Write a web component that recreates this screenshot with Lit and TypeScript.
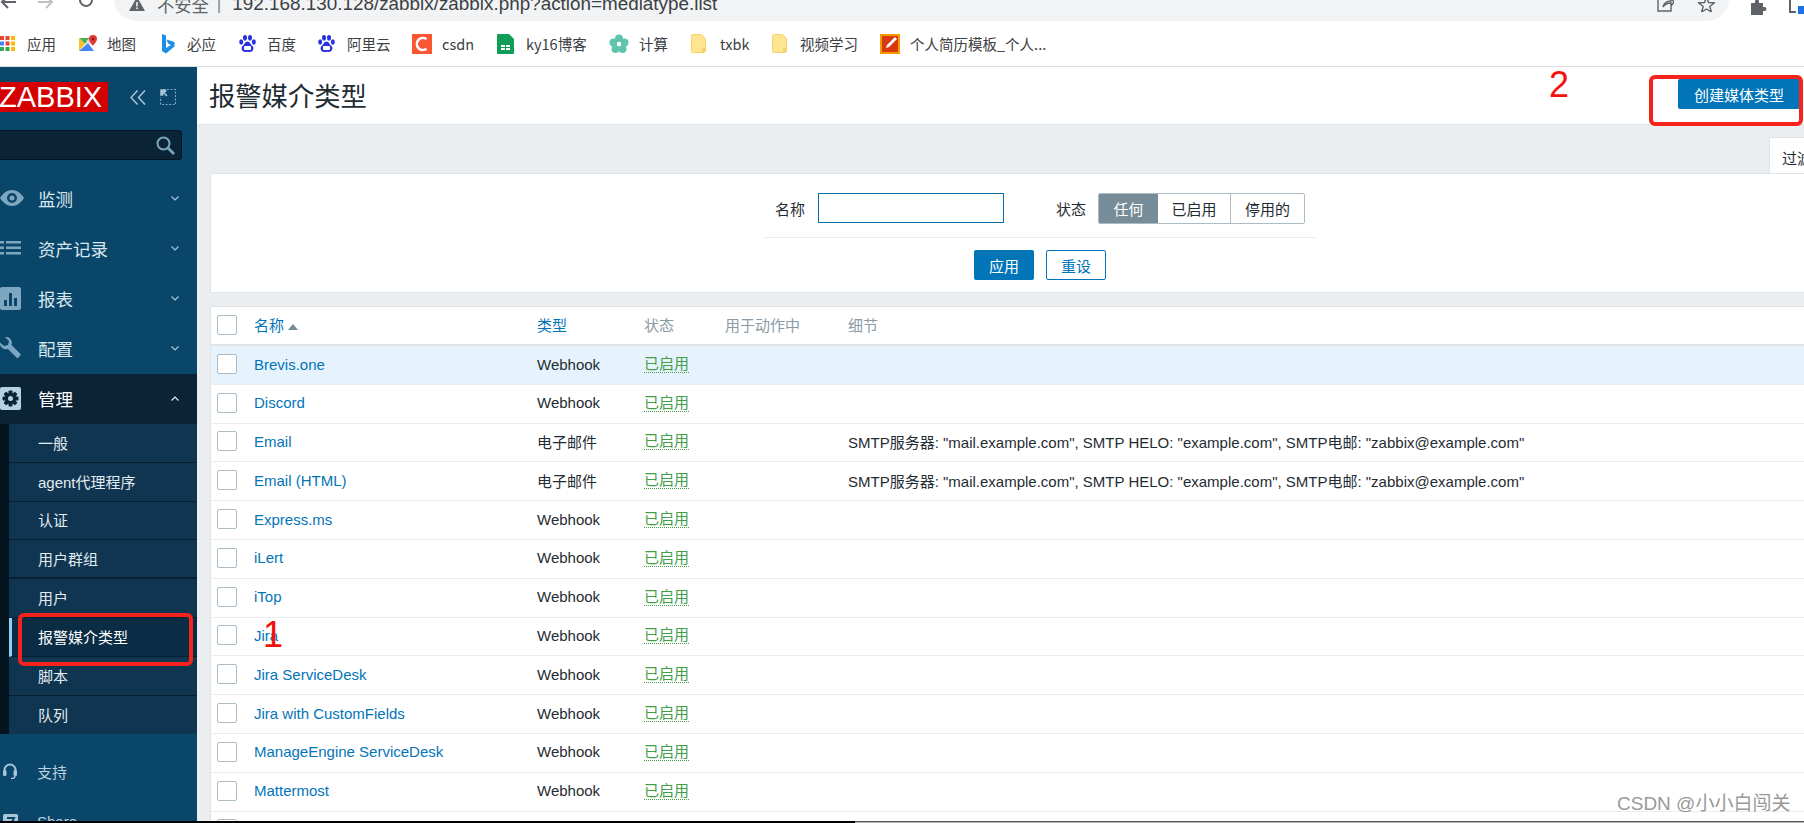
import { LitElement, html, svg, css } from "lit";
import { customElement } from "lit/decorators.js";

const icons: Record<string, unknown> = {
  apps: html`<svg width="15" height="15" viewBox="0 0 15 15">
    ${[["#ea4335","#ea4335","#fbbc05"],["#4285f4","#ea4335","#fbbc05"],["#34a853","#34a853","#fbbc05"]].map((r,y)=>r.map((c,x)=>svg`<rect x=${x*5.5} y=${y*5.5} width="4" height="4" fill=${c}/>`))}
  </svg>`,
  maps: html`<svg width="18" height="18" viewBox="0 0 18 18">
    <path d="M0 3h12L6 9 0 3z" fill="#4caf50"/><path d="M0 3l6 6-6 7V3z" fill="#fbc02d"/><path d="M0 16l9-8 6 8H0z" fill="#4285f4"/><path d="M7 6l4-3h3l-3 6-4-3z" fill="#d8d8d8"/><path d="M14 0a4 4 0 0 1 4 4c0 3-4 6-4 7-.4-1-4-4-4-7a4 4 0 0 1 4-4z" fill="#e53935"/><circle cx="14" cy="4" r="1.4" fill="#8f1d18"/>
  </svg>`,
  bing: html`<svg width="14" height="20" viewBox="0 0 14 20">
    <path d="M1 0l4 1.500v12.500l5-3-3-1.500-1.500-4L13.500 8v4.500L5 19.500 1 17z" fill="#1b8fe8"/>
  </svg>`,
  paw: html`<svg width="17" height="18" viewBox="0 0 17 18" fill="#2932e1">
    <ellipse cx="2.200" cy="7" rx="2" ry="2.700"/><ellipse cx="6" cy="2.800" rx="2" ry="2.800"/><ellipse cx="11" cy="2.800" rx="2" ry="2.800"/><ellipse cx="14.800" cy="7" rx="2" ry="2.700"/><path d="M8.500 6.500c2.500 0 3 3 5 4.500 2 2 .5 6-2.500 6-1 0-1.500-.3-2.500-.3S7 17 6 17c-3 0-4.500-4-2.500-6 2-1.500 2.500-4.500 5-4.500z"/><rect x="5" y="11" width="7" height="4" rx="1" fill="#fff"/>
  </svg>`,
  csdn: html`<svg width="20" height="20" viewBox="0 0 20 20"><rect width="20" height="20" fill="#fc5531"/><path d="M14.500 5.200A6 6 0 1 0 14.500 14.800" fill="none" stroke="#fff" stroke-width="2.600"/></svg>`,
  sheet: html`<svg width="17" height="20" viewBox="0 0 17 20"><path d="M1 0h11l5 5v14a1 1 0 0 1-1 1H1a1 1 0 0 1-1-1V1a1 1 0 0 1 1-1z" fill="#0f9d58"/><path d="M4 11h4v2H4zm5 0h4v2H9zm-5 3h4v2H4zm5 0h4v2H9z" fill="#fff"/></svg>`,
  flower: html`<svg width="20" height="20" viewBox="0 0 20 20" fill="#5fc4ad"><circle cx="10" cy="4.500" r="4"/><circle cx="4.500" cy="8.500" r="4"/><circle cx="15.500" cy="8.500" r="4"/><circle cx="6.500" cy="15" r="4"/><circle cx="13.500" cy="15" r="4"/><circle cx="10" cy="10" r="2.200" fill="#fff"/></svg>`,
  folder: html`<svg width="15" height="19" viewBox="0 0 15 19"><path d="M1.500.5h9l4 4v12a2 2 0 0 1-2 2h-11a1 1 0 0 1-1-1v-16a1 1 0 0 1 1-1z" fill="#ffe58f" stroke="#f5d36b"/><rect x="11" y="14" width="3" height="4" fill="#f5d36b"/></svg>`,
  note: html`<svg width="20" height="20" viewBox="0 0 20 20"><rect width="20" height="20" fill="#f59b00"/><rect x="2" y="2" width="16" height="16" fill="#d8380e"/><path d="M6 14l1-3 8-8 2 2-8 8-3 1z" fill="#fff"/></svg>`,
};

const marks = [
  ["apps", 27, 79, "应用"], ["maps", 28, 82, "地图"], ["bing", 26, 78, "必应"], ["paw", 28, 79, "百度"],
  ["paw", 29, 94, "阿里云"], ["csdn", 30, 85, "csdn"], ["sheet", 29, 112, "ky16博客"], ["flower", 30, 82, "计算"],
  ["folder", 29, 81, "txbk"], ["folder", 28, 108, "视频学习"], ["note", 30, 200, "个人简历模板_个人..."],
] as const;

const navIcons: Record<string, unknown> = {
  eye: html`<svg width="24" height="16" viewBox="0 0 24 16"><path fill-rule="evenodd" d="M12 0c5 0 9 3.500 12 8-3 4.500-7 8-12 8S3 12.500 0 8c3-4.500 7-8 12-8zm0 3a5 5 0 1 0 0 10 5 5 0 0 0 0-10zm0 2.500a2.500 2.500 0 1 1 0 5 2.500 2.500 0 0 1 0-5z" fill="#7da7c1"/></svg>`,
  list: html`<svg width="21" height="14" viewBox="0 0 21 14" fill="#7da7c1"><rect y="0" width="4" height="2.500"/><rect y="5.500" width="4" height="2.500"/><rect y="11" width="4" height="2.500"/><rect x="6" y="0" width="15" height="2.500"/><rect x="6" y="5.500" width="15" height="2.500"/><rect x="6" y="11" width="15" height="2.500"/></svg>`,
  bars: html`<svg width="21" height="23" viewBox="0 0 21 23"><rect width="21" height="23" rx="2" fill="#7da7c1"/><path d="M4 13h3v6H4zM9 6h3v13H9zM14 11h3v8h-3z" fill="#0a466a"/></svg>`,
  wrench: html`<svg width="21" height="22" viewBox="0 0 21 22"><path d="M5 0a6 6 0 0 1 6.500 8L21 17.500 17.500 21.500 8 12A6 6 0 0 1 0 5.500L4 9l4-1 1-4-4-4z" fill="#7da7c1"/></svg>`,
  gear: html`<svg width="21" height="23" viewBox="0 0 21 23"><rect width="21" height="23" rx="2" fill="#b5d2e4"/><g transform="translate(10.500 11.500)"><g fill="#0a2335">${[0,45,90,135].map(a=>svg`<rect x="-2" y="-8" width="4" height="16" rx="1" transform="rotate(${a})"/>`)}</g><circle r="5.500" fill="#0a2335"/><circle r="2.500" fill="#b5d2e4"/></g></svg>`,
  headset: html`<svg width="14" height="16" viewBox="0 0 14 16" fill="none"><path d="M1.500 9V7a5.500 5.500 0 0 1 11 0v2" stroke="#a9c6d8" stroke-width="2"/><rect x="0" y="7" width="3.500" height="6" rx="1.500" fill="#a9c6d8"/><rect x="10.500" y="7" width="3.500" height="6" rx="1.500" fill="#a9c6d8"/><path d="M12 13c0 2-2 2.500-4 2.500" stroke="#a9c6d8" stroke-width="1.500"/></svg>`,
  share: html`<svg width="15" height="15" viewBox="0 0 15 15"><rect width="15" height="15" rx="1.500" fill="#a9c6d8"/><path d="M4 4h7L7 12" fill="none" stroke="#0a466a" stroke-width="2"/></svg>`,
};

const chev = (up = false) => html`<svg class="chev" width="8" height="5" viewBox="0 0 8 5"><path d=${up ? "M.5 4.500L4 1l3.500 3.500" : "M.5.5L4 4 7.500.5"} fill="none" stroke=${up ? "#e8f0f5" : "#a9c6d8"} stroke-width="1.200"/></svg>`;

const nav = [
  ["eye", "监测"], ["list", "资产记录"], ["bars", "报表"], ["wrench", "配置"],
];
const subs = ["一般", "agent代理程序", "认证", "用户群组", "用户", "报警媒介类型", "脚本", "队列"];

const smtp = 'SMTP服务器: "mail.example.com", SMTP HELO: "example.com", SMTP电邮: "zabbix@example.com"';
const rows = [
  ["Brevis.one", "Webhook", ""], ["Discord", "Webhook", ""], ["Email", "电子邮件", smtp], ["Email (HTML)", "电子邮件", smtp],
  ["Express.ms", "Webhook", ""], ["iLert", "Webhook", ""], ["iTop", "Webhook", ""], ["Jira", "Webhook", ""],
  ["Jira ServiceDesk", "Webhook", ""], ["Jira with CustomFields", "Webhook", ""], ["ManageEngine ServiceDesk", "Webhook", ""],
  ["Mattermost", "Webhook", ""], ["MS Teams", "Webhook", ""],
];

@customElement("app-root")
export class AppRoot extends LitElement {
  static styles = css`
    :host { display: block; position: relative; width: 1804px; height: 823px; overflow: hidden; background: #fff;
      font-family: "Liberation Sans", "Noto Sans CJK SC", sans-serif; font-size: 15px; color: #1f2c33; }
    .page { display: flex; flex-direction: column; height: 823px; }
    .toolbar { height: 21px; flex: none; display: flex; align-items: center; position: relative; overflow: hidden; }
    .tb-nav { display: flex; width: 114px; flex: none; height: 21px; }
    .tb-nav svg { flex: none; }
    .tb-nav .back { margin: -6px 22px 0 0; }
    .tb-nav .fwd { margin: -6px 24px 0 0; }
    .tb-nav .reload { margin-top: -8px; }
    .omni { flex: none; width: 1615px; height: 44px; margin-top: -23px; background: #f1f3f4; border-radius: 22px; display: flex; align-items: center;
      padding: 10px 0 0 15px; box-sizing: border-box; color: #5f6368; font-size: 17.300px; white-space: nowrap; justify-content: flex-start; }
    .omni .warn { margin-right: 12px; flex: none; }
    .omni .sep { margin: 0 11px 0 8px; color: #80868b; }
    .omni .url { color: #3c4043; font-size: 18.880px; }
    .omni .actions { margin-left: auto; display: flex; gap: 24px; padding-right: 14px; align-items: center; }
    .ext { display: flex; gap: 22px; margin-left: 19px; align-items: center; }
    .ext svg { margin-top: -6px; }
    .bookmarks { height: 46px; flex: none; box-sizing: border-box; border-bottom: 1px solid #dadce0; display: flex; align-items: center; }
    .bm { display: flex; align-items: center; flex: none; font-size: 14.500px; color: #3c4043; white-space: nowrap; font-family: "Noto Sans CJK SC", "Liberation Sans", sans-serif; }
    .bm-ic { display: flex; align-items: center; flex: none; }
    .body { flex: 1; min-height: 0; display: flex; }
    .side { width: 197px; flex: none; background: #0a466a; overflow: hidden; color: #d9e6ee; }
    .logo-row { display: flex; align-items: center; height: 30px; margin-top: 15px; }
    .logo { width: 108px; height: 30px; background: #d40000; color: #fff; font-size: 29px; line-height: 30px; overflow: hidden; white-space: nowrap; box-sizing: border-box; text-indent: -1px; }
    .logo-row .collapse { margin-left: 22px; }
    .logo-row .kiosk { margin-left: 14px; }
    .search { margin: 18px 0 14px -4px; width: 186px; height: 30px; box-sizing: border-box; background: #0a2335; border: 1px solid #04141f; border-radius: 3px; display: flex; align-items: center; justify-content: flex-end; padding-right: 6px; }
    .nav-item { height: 50px; box-sizing: border-box; padding-bottom: 2px; display: flex; align-items: center; font-size: 17.500px; position: relative; }
    .nav-item .ni { width: 38px; flex: none; display: flex; align-items: center; }
    .nav-item .chev { margin-left: auto; margin-right: 18px; }
    .nav-item.active { background: #0a2335; color: #fff; }
    .sub { display: flex; flex-direction: column; border-left: 9px solid #04151f; background: #0f3550; height: 310px; box-sizing: border-box; overflow: hidden; }
    .sub-item { height: 38.800px; flex: none; box-sizing: border-box; display: flex; align-items: center; padding: 0 0 1px 29px; font-size: 15px; color: #e2ecf2; border-bottom: 1px solid #07202f; }
    .sub-item.thick { border-bottom-width: 2px; }
    .sub-item.current { background: #0a2c44; border-left: 3px solid #8fd2f7; padding-left: 26px; color: #fff; }
    .sub-item:last-child { border-bottom: none; }
    .lower { margin-top: 13px; }
    .lower .nav-item { font-size: 15px; color: #b9d0de; }
    .lower .ni { padding-left: 3px; width: 37px; box-sizing: border-box; }
    .main { flex: 1; min-width: 0; background: #ebeef0; overflow: hidden; }
    .head { height: 58px; box-sizing: border-box; background: #fff; border-bottom: 1px solid #dfe4e7; display: flex; align-items: center; justify-content: space-between; padding: 0 4px 0 12px; }
    .head h1 { margin: 0; font-weight: 400; font-size: 26.300px; font-family: "Noto Sans CJK SC", sans-serif; line-height: 1; }
    .btn-create { width: 122px; height: 30px; margin-top: -3px; background: #0275b8; color: #fff; border-radius: 2px; display: flex; align-items: center; justify-content: center; font-size: 15px; }
    .content { width: 1660px; margin-left: 13px; }
    .tab-row { display: flex; justify-content: flex-end; margin-top: 12px; height: 37px; }
    .tab { width: 101px; box-sizing: border-box; background: #fff; border: 1px solid #dfe4e7; border-bottom: none; padding: 9px 0 0 12px; height: 37px; }
    .filter { background: #fff; border: 1px solid #dfe4e7; margin-top: -1px; height: 120px; box-sizing: border-box; display: flex; flex-direction: column; align-items: center; padding-top: 19px; position: relative; }
    .f-row { display: flex; align-items: center; height: 31px; }
    .f-input { width: 186px; height: 30px; box-sizing: border-box; border: 1px solid #0a6da6; margin: 0 52px 1px 13px; }
    .seg { display: flex; height: 31px; margin-left: 12px; border: 1px solid #acbbc4; border-radius: 2px; box-sizing: border-box; width: 207px; overflow: hidden; }
    .seg span { display: flex; align-items: center; justify-content: center; }
    .seg span:nth-child(1) { width: 59px; background: #768d99; color: #fff; }
    .seg span:nth-child(2) { width: 73px; border-right: 1px solid #acbbc4; box-sizing: border-box; }
    .seg span:nth-child(3) { flex: 1; }
    .f-line { width: 554px; height: 1px; background: #ebeef0; margin-top: 13px; }
    .f-btns { display: flex; gap: 12px; margin-top: 12px; }
    .f-btns span { width: 60px; height: 30px; box-sizing: border-box; border-radius: 2px; display: flex; align-items: center; justify-content: center; }
    .f-btns .ok { background: #0275b8; color: #fff; }
    .f-btns .no { border: 1px solid #0275b8; color: #0275b8; }
    .table { margin-top: 13px; background: #fff; border: 1px solid #dfe4e7; border-bottom: none; }
    .tr { display: grid; grid-template-columns: 37px 283px 107px 81px 123px 1fr; align-items: center; padding: 0 0 2px 6px; height: 38.800px; box-sizing: border-box; border-bottom: 1px solid #ebeef0; white-space: nowrap; }
    .tr.th { height: 39px; border-bottom: 2px solid #dfe4e7; color: #8a9ba6; }
    .tr.hl { background: #e6f3fc; padding-bottom: 1px; }
    .cb { width: 20px; height: 20px; box-sizing: border-box; border: 1px solid #acbbc4; border-radius: 2px; background: #fff; }
    .link { color: #0275b8; }
    .sort { display: inline-block; width: 0; height: 0; border: 5px solid transparent; border-top: none; border-bottom: 6px solid #768d99; margin-left: 4px; vertical-align: 1px; }
    .on { justify-self: start; color: #429e47; border-bottom: 1px dotted #429e47; line-height: 17px; }
    .strip { height: 2px; flex: none; display: flex; }
    .strip .a { width: 855px; background: #000; }
    .strip .b { flex: 1; background: linear-gradient(#555 50%, #b5b5b5 50%); }
    .redbox { position: absolute; border: 4px solid #f5231b; border-radius: 6px; box-sizing: border-box; }
    .box1 { left: 18px; top: 613px; width: 175px; height: 53px; }
    .box2 { left: 1649px; top: 75px; width: 154px; height: 51px; }
    .anno { position: absolute; color: #f5100a; font-size: 36px; line-height: 36px; }
    .a1 { left: 263px; top: 617px; }
    .a2 { left: 1549px; top: 67px; }
    .wm { position: absolute; left: 1617px; top: 792px; font-size: 19px; line-height: 24px; color: #999; white-space: nowrap; }
  `;

  render() {
    return html`<div class="page">
      <div class="toolbar">
        <div class="tb-nav">
          <svg class="back" width="16" height="16" viewBox="0 0 16 16"><path d="M16 8H2M8 2L2 8l6 6" fill="none" stroke="#5f6368" stroke-width="2"/></svg>
          <svg class="fwd" width="16" height="16" viewBox="0 0 16 16"><path d="M0 8h14M8 2l6 6-6 6" fill="none" stroke="#bdc1c6" stroke-width="2"/></svg>
          <svg class="reload" width="16" height="16" viewBox="0 0 16 16"><path d="M14 8a6 6 0 1 1-2-4.500M14 1v4h-4" fill="none" stroke="#5f6368" stroke-width="2"/></svg>
        </div>
        <div class="omni">
          <svg class="warn" width="16" height="14" viewBox="0 0 16 14"><path d="M8 0l8 14H0z" fill="#5f6368"/><rect x="7.200" y="5" width="1.600" height="4.500" fill="#f1f3f4"/><rect x="7.200" y="10.500" width="1.600" height="1.600" fill="#f1f3f4"/></svg>
          <span>不安全</span><span class="sep">|</span><span class="url">192.168.130.128/zabbix/zabbix.php?action=mediatype.list</span>
          <span class="actions">
            <svg width="17" height="15" viewBox="0 0 17 15"><path d="M1 3v11h13V9M6 10c1-4 4-6 8-6V1l3 4-3 4V6c-3 0-6 1-8 4z" fill="none" stroke="#5f6368" stroke-width="1.400"/></svg>
            <svg width="17" height="15" viewBox="0 0 17 15"><path d="M8.500 0l2 5.500 6 .3-4.700 3.700 1.600 5.500-4.900-3-4.900 3 1.600-5.500L.5 5.800l6-.3z" fill="none" stroke="#5f6368" stroke-width="1.400"/></svg>
          </span>
        </div>
        <div class="ext">
          <svg width="19" height="15" viewBox="0 0 19 15"><path d="M3 3h4V1.500a2 2 0 0 1 4 0V3h4v4h1.500a2 2 0 0 1 0 4H15v4H3z" fill="#5f6368"/></svg>
          <svg width="15" height="15" viewBox="0 0 15 15"><path d="M1 0v12h6" fill="none" stroke="#5f6368" stroke-width="2"/><rect x="9" y="6" width="6" height="8" fill="#1a73e8"/></svg>
        </div>
      </div>
      <div class="bookmarks">
        ${marks.map(([ic, w, total, label]) => html`<div class="bm" style="width:${total}px"><span class="bm-ic" style="width:${w}px">${icons[ic]}</span>${label}</div>`)}
      </div>
      <div class="body">
        <aside class="side">
          <div class="logo-row">
            <div class="logo">ZABBIX</div>
            <svg class="collapse" width="16" height="15" viewBox="0 0 16 15"><path d="M7.500.5L1 7.500l6.500 7M15 .5l-6.500 7 6.500 7" fill="none" stroke="#a9c6d8" stroke-width="1.500"/></svg>
            <svg class="kiosk" width="16" height="16" viewBox="0 0 16 16"><path d="M7 .5h8.500V15.500H.5V8" fill="none" stroke="#7da7c1" stroke-width="1.200" stroke-dasharray="2 1.500"/><path d="M1 1l6 6M1 1h4.500v1.500L2.500 2.500V6H1z" fill="#a9c6d8" stroke="#a9c6d8" stroke-width="1.500"/></svg>
          </div>
          <div class="search">
            <svg width="19" height="19" viewBox="0 0 19 19"><circle cx="7.500" cy="7.500" r="6" fill="none" stroke="#7da7c1" stroke-width="2"/><path d="M12 12l6 6" stroke="#7da7c1" stroke-width="2.600"/></svg>
          </div>
          ${nav.map(([ic, t]) => html`<div class="nav-item"><span class="ni">${navIcons[ic]}</span>${t}${chev()}</div>`)}
          <div class="nav-item active"><span class="ni">${navIcons.gear}</span>管理${chev(true)}</div>
          <div class="sub">
            ${subs.map((s, i) => html`<div class="sub-item ${i === 3 ? "thick" : ""} ${i === 5 ? "current" : ""}">${s}</div>`)}
          </div>
          <div class="lower">
            <div class="nav-item"><span class="ni">${navIcons.headset}</span>支持</div>
            <div class="nav-item"><span class="ni">${navIcons.share}</span>Share</div>
          </div>
        </aside>
        <main class="main">
          <div class="head">
            <h1>报警媒介类型</h1>
            <div class="btn-create">创建媒体类型</div>
          </div>
          <div class="content">
            <div class="tab-row"><div class="tab">过滤</div></div>
            <div class="filter">
              <div class="f-row">
                <span>名称</span><span class="f-input"></span>
                <span>状态</span>
                <div class="seg"><span>任何</span><span>已启用</span><span>停用的</span></div>
              </div>
              <div class="f-line"></div>
              <div class="f-btns"><span class="ok">应用</span><span class="no">重设</span></div>
            </div>
            <div class="table">
              <div class="tr th">
                <span class="cb"></span>
                <span class="link">名称<i class="sort"></i></span>
                <span class="link">类型</span><span>状态</span><span>用于动作中</span><span>细节</span>
              </div>
              ${rows.map((r, i) => html`<div class="tr ${i === 0 ? "hl" : ""}">
                <span class="cb"></span><span class="link">${r[0]}</span><span>${r[1]}</span><span class="on">已启用</span><span></span><span>${r[2]}</span>
              </div>`)}
            </div>
          </div>
        </main>
      </div>
      <div class="strip"><span class="a"></span><span class="b"></span></div>
    </div>
    <div class="redbox box1"></div>
    <div class="redbox box2"></div>
    <div class="anno a1">1</div>
    <div class="anno a2">2</div>
    <div class="wm">CSDN @小小白闯关</div>`;
  }
}
